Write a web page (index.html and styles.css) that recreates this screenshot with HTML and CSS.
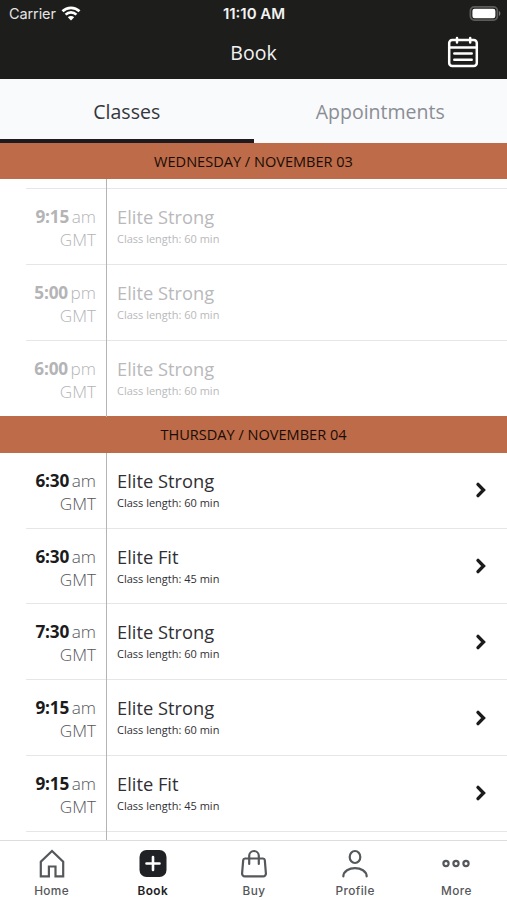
FILE: index.html
```html
<!DOCTYPE html>
<html lang="en">
  <head>
    <meta charset="UTF-8" />
    <meta name="viewport" content="width=device-width, initial-scale=1.0" />
    <title>Book</title>
    <link rel="stylesheet" href="styles.css">
  </head>
  <body>
    <header class="header">
      <div class="status-bar">
        <div class="carrier">
          <span>Carrier</span>
          <svg width="20" height="15" viewBox="0 0 20 15" fill="none" stroke="#fff" stroke-width="2.7">
            <path d="M1.5 5.3a12.2 12.2 0 0 1 17 0" />
            <path d="M4.6 8.6a7.8 7.8 0 0 1 10.8 0" />
            <path d="M10 14.4 6.8 11.3a4.6 4.6 0 0 1 6.4 0z" fill="#fff" stroke="none" />
          </svg>
        </div>
        <span class="clock">11:10 AM</span>
        <svg class="battery" width="32" height="15" viewBox="0 0 32 15">
          <rect x="1.4" y="0.9" width="27" height="13.2" rx="4" fill="#1d1d1b" stroke="#5c5c5a" stroke-width="1.8" />
          <rect x="3.4" y="2.7" width="23" height="9.6" rx="2.2" fill="#fff" />
          <path d="M30 5v5c1.8-.8 1.8-4.2 0-5z" fill="#777775" />
        </svg>
      </div>
      <div class="title-bar">
        <h1>Book</h1>
        <svg class="calendar" width="32" height="32" viewBox="0 0 32 32" fill="none" stroke="#fff" stroke-width="2.5" stroke-linecap="round">
          <rect x="2.2" y="4" width="27.6" height="26" rx="3" />
          <path d="M2.2 11.5h27.6M10 2v4.5M23.2 2v4.5" />
          <path d="M7.3 17.6h17.4M7.3 23.8h17.4" />
        </svg>
      </div>
    </header>

    <nav class="tabs">
      <div class="tab active">Classes</div>
      <div class="tab">Appointments</div>
    </nav>

    <main class="schedule">
      <h2 class="day">WEDNESDAY / NOVEMBER 03</h2>
      <ul class="class-list past">
        <li class="class-row spacer"><div class="time"></div></li>
        <li class="class-row">
          <div class="time"><b>9:15</b> am<br>GMT</div>
          <div class="info"><h3>Elite Strong</h3><p>Class length: 60 min</p></div>
        </li>
        <li class="class-row">
          <div class="time"><b>5:00</b> pm<br>GMT</div>
          <div class="info"><h3>Elite Strong</h3><p>Class length: 60 min</p></div>
        </li>
        <li class="class-row">
          <div class="time"><b>6:00</b> pm<br>GMT</div>
          <div class="info"><h3>Elite Strong</h3><p>Class length: 60 min</p></div>
        </li>
      </ul>

      <h2 class="day">THURSDAY / NOVEMBER 04</h2>
      <ul class="class-list">
        <li class="class-row">
          <div class="time"><b>6:30</b> am<br>GMT</div>
          <div class="info"><h3>Elite Strong</h3><p>Class length: 60 min</p></div>
          <svg class="chevron" viewBox="0 0 12 18"><path d="M3 3.4l5.5 5.6L3 14.6" /></svg>
        </li>
        <li class="class-row">
          <div class="time"><b>6:30</b> am<br>GMT</div>
          <div class="info"><h3>Elite Fit</h3><p>Class length: 45 min</p></div>
          <svg class="chevron" viewBox="0 0 12 18"><path d="M3 3.4l5.5 5.6L3 14.6" /></svg>
        </li>
        <li class="class-row">
          <div class="time"><b>7:30</b> am<br>GMT</div>
          <div class="info"><h3>Elite Strong</h3><p>Class length: 60 min</p></div>
          <svg class="chevron" viewBox="0 0 12 18"><path d="M3 3.4l5.5 5.6L3 14.6" /></svg>
        </li>
        <li class="class-row">
          <div class="time"><b>9:15</b> am<br>GMT</div>
          <div class="info"><h3>Elite Strong</h3><p>Class length: 60 min</p></div>
          <svg class="chevron" viewBox="0 0 12 18"><path d="M3 3.4l5.5 5.6L3 14.6" /></svg>
        </li>
        <li class="class-row">
          <div class="time"><b>9:15</b> am<br>GMT</div>
          <div class="info"><h3>Elite Fit</h3><p>Class length: 45 min</p></div>
          <svg class="chevron" viewBox="0 0 12 18"><path d="M3 3.4l5.5 5.6L3 14.6" /></svg>
        </li>
        <li class="class-row spacer"><div class="time"></div></li>
      </ul>
    </main>

    <footer class="bottom-nav">
      <div class="nav-item">
        <svg width="32" height="30" viewBox="0 0 32 30">
          <path d="M4.8 27.3V12.8L16 2l11.2 10.8v14.5h-7.7v-9.8h-6.6v9.8z" />
        </svg>
        <span>Home</span>
      </div>
      <div class="nav-item selected">
        <svg width="32" height="30" viewBox="0 0 32 30">
          <rect class="book-bg" x="2.5" y="1" width="27" height="27" rx="7" />
          <path class="book-plus" d="M16 8v13M9.5 14.5h13" />
        </svg>
        <span>Book</span>
      </div>
      <div class="nav-item">
        <svg width="32" height="30" viewBox="0 0 32 30">
          <path d="M7 9.5h18a1.8 1.8 0 0 1 1.8 1.6l1.1 13.2a2.8 2.8 0 0 1-2.8 3.1H6.9a2.8 2.8 0 0 1-2.8-3.1l1.1-13.2A1.8 1.8 0 0 1 7 9.5z" />
          <path d="M11.2 15V6.8a4.8 4.8 0 0 1 9.6 0V15" />
        </svg>
        <span>Buy</span>
      </div>
      <div class="nav-item">
        <svg width="32" height="30" viewBox="0 0 32 30">
          <ellipse cx="16" cy="8" rx="5.3" ry="6" />
          <path d="M4.3 27.4c.4-11 23-11 23.4 0" />
        </svg>
        <span>Profile</span>
      </div>
      <div class="nav-item">
        <svg width="32" height="30" viewBox="0 0 32 30">
          <circle cx="6" cy="14.5" r="2.6" />
          <circle cx="16" cy="14.5" r="2.6" />
          <circle cx="26" cy="14.5" r="2.6" />
        </svg>
        <span>More</span>
      </div>
    </footer>
  </body>
</html>
```
FILE: styles.css
```css
* {
  box-sizing: border-box;
}
body {
  display: flex;
  flex-direction: column;
  height: 900px;
  margin: 0;
  overflow: hidden;
  background-color: #fff;
  color: #303034;
  font-family: "Open Sans", sans-serif;
}
h1, h2, h3, p, ul {
  margin: 0;
  padding: 0;
  font-weight: normal;
}
ul {
  list-style: none;
}

.header {
  flex: none;
  height: 79px;
  background-color: #1d1d1b;
  color: #f2f2f2;
}
.status-bar {
  display: grid;
  grid-template-columns: 1fr auto 1fr;
  align-items: center;
  height: 27px;
  padding: 0 6px 0 9px;
  font-family: Inter, sans-serif;
  font-size: 14.5px;
}
.carrier {
  display: flex;
  align-items: center;
  gap: 5px;
  color: #e4e4e4;
}
.carrier span {
  letter-spacing: -0.1px;
}
.clock {
  margin-right: 2px;
  font-size: 15px;
  font-weight: 600;
}
.battery {
  justify-self: end;
}
.title-bar {
  display: grid;
  grid-template-columns: 1fr auto 1fr;
  align-items: center;
  height: 50px;
  padding: 0 28px;
}
.title-bar h1 {
  grid-column: 2;
  font-size: 19.5px;
}
.calendar {
  justify-self: end;
}

.tabs {
  display: flex;
  flex: none;
  height: 63.5px;
  background-color: #f8fafc;
}
.tab {
  flex: 1;
  border-bottom: 4px solid transparent;
  color: #8b8d94;
  font-size: 19.5px;
  line-height: 65px;
  text-align: center;
}
.tab.active {
  border-bottom-color: #1e1a1e;
  color: #35363b;
}

.schedule {
  flex: 1;
  min-height: 0;
  overflow: hidden;
}
.day {
  height: 36.5px;
  background-color: #bd6b48;
  color: #1a0c06;
  font-size: 14.55px;
  line-height: 36px;
  text-align: center;
}
.class-row {
  display: flex;
  height: 75.75px;
  margin-left: 26px;
  border-bottom: 1px solid #e6e6e6;
}
.past .class-row:last-child {
  border-bottom: none;
}
.class-row.spacer {
  height: 10px;
}
.time {
  width: 81px;
  margin-bottom: -1px;
  padding: 16px 10px 0 0;
  border-right: 1px solid #b4b4b4;
  color: #55565a;
  font-size: 17.2px;
  font-weight: 300;
  line-height: 23px;
  text-align: right;
  word-spacing: -1.8px;
}
.time b {
  color: #1b1b1d;
  font-weight: 700;
  letter-spacing: -0.2px;
}
.info {
  flex: 1;
  padding: 15px 0 0 10px;
}
.info h3 {
  font-size: 18.3px;
  line-height: 26px;
}
.info p {
  font-size: 11px;
  line-height: 17px;
}
.chevron {
  width: 12px;
  height: 18px;
  margin: 28.5px 20px 0 0;
  fill: none;
  stroke: #1b1b1b;
  stroke-width: 3.4;
  stroke-linecap: round;
}
.past .info {
  color: #b9b9bb;
}
.past .time {
  color: #b4b4b6;
}
.past .time b {
  color: #b4b4b6;
}

.bottom-nav {
  display: flex;
  flex: none;
  height: 60px;
  padding-left: 1px;
  border-top: 1px solid #dcdddf;
  background-color: #fff;
}
.nav-item {
  display: flex;
  flex: 1;
  flex-direction: column;
  align-items: center;
  padding-top: 8px;
  color: #55575a;
  font-family: Inter, sans-serif;
  font-size: 11.8px;
  font-weight: 500;
  letter-spacing: 0.4px;
  line-height: 24px;
}
.nav-item svg {
  flex: none;
  fill: none;
  stroke: #55585b;
  stroke-width: 2.2;
  stroke-linecap: round;
}
.nav-item.selected {
  color: #202124;
  font-weight: 600;
}
.nav-item .book-bg {
  fill: #202124;
  stroke: none;
}
.nav-item .book-plus {
  stroke: #fff;
  stroke-width: 2.6;
}
```
